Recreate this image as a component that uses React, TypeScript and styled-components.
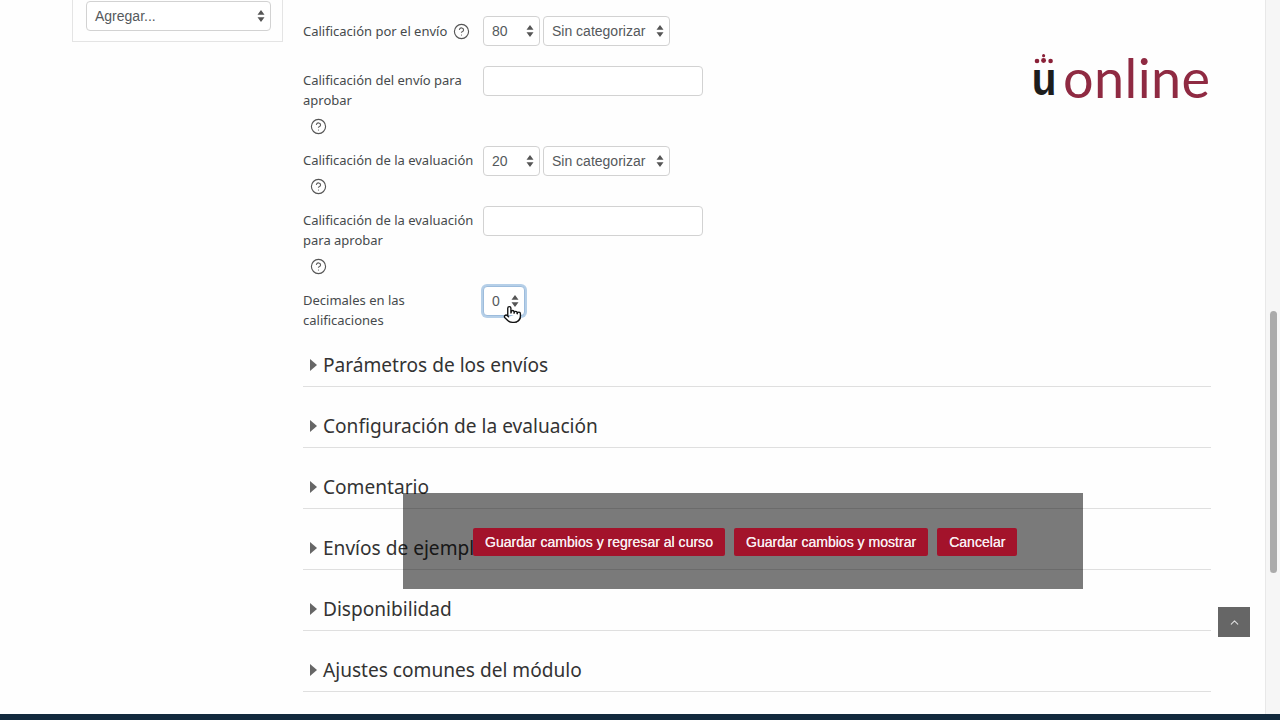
import React from 'react';
import styled, { createGlobalStyle } from 'styled-components';
import { ChevronUp, CircleHelp, Pointer } from 'lucide-react';

const GlobalStyle = createGlobalStyle`
  html, body {
    margin: 0;
    height: 720px;
    overflow: hidden;
    background: #fff;
  }
  * {
    box-sizing: border-box;
  }
`;

const sections = [
  'Parámetros de los envíos',
  'Configuración de la evaluación',
  'Comentario',
  'Envíos de ejemplo',
  'Disponibilidad',
  'Ajustes comunes del módulo',
];

const Arrows = () => (
  <ArrowIcon width="8" height="14" viewBox="0 0 8 14">
    <path d="M4 1 L7.5 5.8 H0.5 Z M4 13 L7.5 8.2 H0.5 Z" fill="#555" />
  </ArrowIcon>
);

const Help = () => (
  <HelpIcon>
    <CircleHelp size={17} strokeWidth={1.6} />
  </HelpIcon>
);

const App = () => {
  return (
    <Page>
      <GlobalStyle />
      <Content>
        <Sidebar>
          <SelectBox $width={185}>
            Agregar...
            <Arrows />
          </SelectBox>
        </Sidebar>
        <Main>
          <Form>
            <Row>
              <Label>
                Calificación por el envío
                <Help />
              </Label>
              <Controls>
                <SelectBox $width={57}>
                  80
                  <Arrows />
                </SelectBox>
                <SelectBox $width={127}>
                  Sin categorizar
                  <Arrows />
                </SelectBox>
              </Controls>
            </Row>
            <Row>
              <Label>
                Calificación del envío para aprobar
                <HelpLine>
                  <Help />
                </HelpLine>
              </Label>
              <Controls>
                <TextInput />
              </Controls>
            </Row>
            <Row>
              <Label>
                Calificación de la evaluación
                <HelpLine>
                  <Help />
                </HelpLine>
              </Label>
              <Controls>
                <SelectBox $width={57}>
                  20
                  <Arrows />
                </SelectBox>
                <SelectBox $width={127}>
                  Sin categorizar
                  <Arrows />
                </SelectBox>
              </Controls>
            </Row>
            <Row>
              <Label>
                Calificación de la evaluación para aprobar
                <HelpLine>
                  <Help />
                </HelpLine>
              </Label>
              <Controls>
                <TextInput />
              </Controls>
            </Row>
            <Row>
              <Label>Decimales en las calificaciones</Label>
              <Controls>
                <SelectBox $width={42} $focused>
                  0
                  <Arrows />
                  <Cursor>
                    <Pointer size={19} strokeWidth={1.7} fill="#fff" color="#111" />
                  </Cursor>
                </SelectBox>
              </Controls>
            </Row>
          </Form>
          <SectionList>
            {sections.map((title) => (
              <Section key={title}>
                <Caret />
                {title}
              </Section>
            ))}
          </SectionList>
        </Main>
        <Logo>
          <LogoMark>
            <svg width="24" height="17" viewBox="0 0 24 17">
              <g fill="#8a2038">
                <circle cx="11.5" cy="2" r="1.9" />
                <circle cx="3.5" cy="8.5" r="2.8" />
                <circle cx="11.5" cy="8" r="3" />
                <circle cx="20" cy="8.5" r="2.8" />
              </g>
            </svg>
            <LogoU>u</LogoU>
          </LogoMark>
          <LogoWord>online</LogoWord>
        </Logo>
        <Scrollbar>
          <Thumb />
        </Scrollbar>
      </Content>
      <Footer />
      <SaveBar>
        <SaveButton>Guardar cambios y regresar al curso</SaveButton>
        <SaveButton>Guardar cambios y mostrar</SaveButton>
        <SaveButton>Cancelar</SaveButton>
      </SaveBar>
      <BackToTop>
        <ChevronUp size={13} strokeWidth={2} />
      </BackToTop>
    </Page>
  );
};

const Page = styled.div`
  position: relative;
  display: flex;
  flex-direction: column;
  width: 1280px;
  height: 720px;
  overflow: hidden;
  background: #fefefe;
`;

const Content = styled.div`
  position: relative;
  flex: 1;
  display: flex;
  min-height: 0;
  padding-left: 72px;
`;

const Sidebar = styled.aside`
  width: 211px;
  height: 42px;
  padding: 1px 11px 0 13px;
  border: 1px solid #e4e4e4;
  border-top: 0;
`;

const Main = styled.main`
  width: 908px;
  margin-left: 20px;
  padding-top: 20px;
  font-family: 'Noto Sans', sans-serif;
  color: #373a3c;
`;

const Form = styled.div`
  display: flex;
  flex-direction: column;
  gap: 14px;
`;

const Row = styled.div`
  display: grid;
  grid-template-columns: 180px 1fr;
  min-height: 36px;
`;

const Label = styled.div`
  width: 175px;
  font-size: 13px;
  line-height: 20px;
  color: #464a4c;

  ${Row}:first-child & {
    padding-top: 1px;
  }
`;

const HelpLine = styled.div`
  height: 20px;
  margin-top: 6px;
  padding-left: 7px;
`;

const HelpIcon = styled.span`
  display: inline-flex;
  vertical-align: -4px;
  margin-left: 6px;
  color: #555;

  ${HelpLine} & {
    margin-left: 0;
  }
`;

const Controls = styled.div`
  display: flex;
  align-items: flex-start;
  gap: 3px;
  margin-top: -4px;
`;

const SelectBox = styled.div<{ $width: number; $focused?: boolean }>`
  position: relative;
  flex: none;
  display: flex;
  align-items: center;
  justify-content: space-between;
  width: ${(p) => p.$width}px;
  height: 30px;
  padding: 0 5px 0 8px;
  border: 1px solid ${(p) => (p.$focused ? '#9dbcdc' : '#d2d2d2')};
  border-radius: 4px;
  background: #fff;
  font-family: 'Liberation Sans', Arial, sans-serif;
  font-size: 14px;
  color: #55595c;
  box-shadow: ${(p) => (p.$focused ? '0 0 0 2px #b5cfe8' : 'none')};
`;

const ArrowIcon = styled.svg`
  flex: none;
`;

const Cursor = styled.span`
  position: absolute;
  left: 19px;
  top: 18px;
  display: flex;
`;

const TextInput = styled.div`
  width: 220px;
  height: 30px;
  border: 1px solid #d2d2d2;
  border-radius: 4px;
  background: #fff;
`;

const SectionList = styled.div`
  display: flex;
  flex-direction: column;
  gap: 25px;
  margin-top: 21px;
`;

const Section = styled.div`
  display: flex;
  align-items: center;
  height: 36px;
  padding: 0 0 7px 7px;
  border-bottom: 1px solid #dfdfdf;
  font-size: 19.1px;
  line-height: 28px;
  color: #333;
`;

const Caret = styled.span`
  width: 0;
  height: 0;
  margin-right: 6px;
  border-left: 7px solid #666;
  border-top: 6px solid transparent;
  border-bottom: 6px solid transparent;
`;

const Logo = styled.div`
  position: absolute;
  left: 1032px;
  top: 54px;
  display: flex;
  align-items: flex-end;
  gap: 7px;
`;

const LogoMark = styled.div`
  display: flex;
  flex-direction: column;
  align-items: center;
  width: 24px;
  height: 48px;
`;

const LogoU = styled.span`
  margin-top: -12px;
  font-family: 'Liberation Sans', Arial, sans-serif;
  font-weight: 700;
  font-size: 46px;
  line-height: 46px;
  color: #1d1d1d;
  transform: scaleX(0.88);
`;

const LogoWord = styled.span`
  font-family: Lato, sans-serif;
  font-weight: 400;
  font-size: 54px;
  line-height: 48px;
  letter-spacing: 0.4px;
  color: #8f2a42;
`;

const Scrollbar = styled.div`
  position: absolute;
  right: 0;
  top: 0;
  bottom: 0;
  width: 15px;
  padding: 311px 3px 0 4px;
  background: #f6f6f6;
  border-left: 1px solid #e8e8e8;
`;

const Thumb = styled.div`
  height: 262px;
  border-radius: 4px;
  background: #ababab;
`;

const Footer = styled.footer`
  flex: none;
  height: 6px;
  background: #12293d;
`;

const SaveBar = styled.div`
  position: absolute;
  left: 403px;
  top: 493px;
  display: flex;
  align-items: center;
  gap: 9px;
  width: 680px;
  height: 96px;
  padding: 2px 0 0 70px;
  background: rgba(0, 0, 0, 0.52);
`;

const SaveButton = styled.button`
  height: 28px;
  padding: 0 12px;
  border: 0;
  border-radius: 2px;
  background: #a3132b;
  font-family: 'Liberation Sans', Arial, sans-serif;
  font-size: 14.05px;
  color: #f8ecee;
  text-shadow: 0 0 0.5px #fff;
`;

const BackToTop = styled.div`
  position: absolute;
  left: 1218px;
  top: 607px;
  display: flex;
  align-items: center;
  justify-content: center;
  width: 32px;
  height: 30px;
  background: #666;
  color: #ddd;
`;

export default App;
